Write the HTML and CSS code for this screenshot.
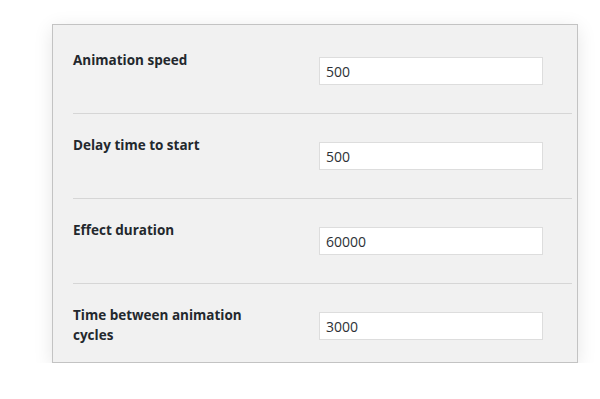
FILE: index.html
```html
<!DOCTYPE html>
<html lang="en">
<head>
    <meta charset="UTF-8">
    <title>Animation settings</title>
    <link rel="stylesheet" href="styles.css">
</head>
<body>
    <div class="panel">
        <div class="settings">
            <div class="row">
                <label class="label" for="speed">Animation speed</label>
                <input class="field" id="speed" type="text" value="500">
            </div>
            <div class="row">
                <label class="label" for="delay">Delay time to start</label>
                <input class="field" id="delay" type="text" value="500">
            </div>
            <div class="row">
                <label class="label" for="duration">Effect duration</label>
                <input class="field" id="duration" type="text" value="60000">
            </div>
            <div class="row">
                <label class="label" for="cycles">Time between animation cycles</label>
                <input class="field" id="cycles" type="text" value="3000">
            </div>
        </div>
    </div>
</body>
</html>
```

FILE: styles.css
```css
:root {
    --panel-bg: #f1f1f1;
    --panel-border: #c3c3c3;
    --line: #d6d6d6;
    --text: #23282d;
    --field-border: #dddddd;
}

body {
    margin: 0;
    padding: 24px 0 0 52px;
    background: #ffffff;
    font-family: 'Open Sans', 'DejaVu Sans', sans-serif;
    color: var(--text);
}

.panel {
    width: 524px;
    background: var(--panel-bg);
    border: 1px solid var(--panel-border);
    box-shadow: 0 4px 18px rgba(0, 0, 0, 0.1);
    padding-top: 4px;
}

.settings {
    margin: 0 5px 0 20px;
}

.row {
    display: flex;
    align-items: flex-start;
    border-bottom: 1px solid var(--line);
}

.row:last-child {
    border-bottom: none;
}

.label {
    width: 200px;
    margin-right: 46px;
    padding-top: 21px;
    font-size: 13.5px;
    font-weight: bold;
    line-height: 20px;
}

.field {
    width: 224px;
    height: 28px;
    margin: 28px 0;
    padding: 0 6px;
    box-sizing: border-box;
    border: 1px solid var(--field-border);
    background: #ffffff;
    font-family: inherit;
    font-size: 14px;
    color: #2c3136;
    outline: none;
}

.row:last-child .field {
    margin-bottom: 22px;
}
```
